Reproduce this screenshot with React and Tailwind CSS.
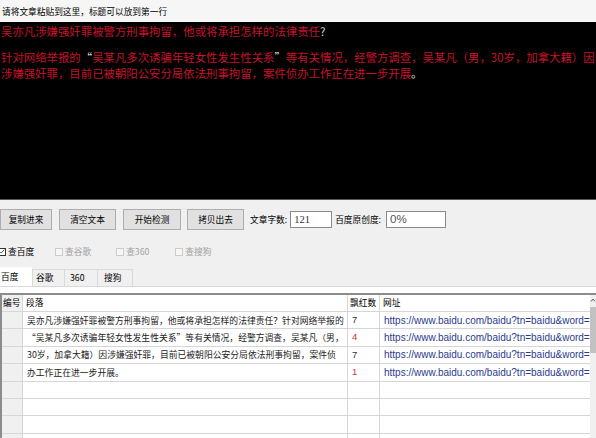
import React from 'react';

const ROWS = [
    { text: '吴亦凡涉嫌强奸罪被警方刑事拘留，他或将承担怎样的法律责任？针对网络举报的', count: '7', color: 'text-[#333333]', tail: '%' },
    { text: '“吴某凡多次诱骗年轻女性发生性关系”等有关情况，经警方调查，吴某凡（男，', count: '4', color: 'text-[#d03030]', tail: '%' },
    { text: '30岁，加拿大籍）因涉嫌强奸罪，目前已被朝阳公安分局依法刑事拘留，案件侦', count: '7', color: 'text-[#333333]', tail: '3' },
    { text: '办工作正在进一步开展。', count: '1', color: 'text-[#c83050]', tail: '%' },
    null, null, null, null,
];

function Button({ children, className = '' }) {
    return (
        <div className={`h-[21px] flex items-center justify-center bg-[#e1e1e1] border border-[#adadad] text-[8.7px] text-black ${className}`}>
            {children}
        </div>
    );
}

function Check({ label, checked, disabled, className = '' }) {
    return (
        <div className={`flex items-center gap-[2px] ${className}`}>
            <div className={`w-[8px] h-[8px] border flex items-center justify-center ${disabled ? 'border-[#cccccc] bg-[#f6f6f6]' : 'border-[#333333] bg-white'}`}>
                {checked && (
                    <svg viewBox="0 0 8 8" className="w-[7px] h-[7px]">
                        <path d="M1 4 L3 6 L7 1.5" fill="none" stroke="#222" strokeWidth="1" />
                    </svg>
                )}
            </div>
            <span className={`text-[8.7px] ${disabled ? 'text-[#a0a0a0]' : 'text-black'}`}>{label}</span>
        </div>
    );
}

export default function App() {
    return (
        <div className="w-[596px] h-[438px] overflow-hidden bg-[#f0f0f0] flex flex-col" style={{ fontFamily: '"Noto Sans CJK SC", "Liberation Sans", sans-serif' }}>
            <div className="h-[22px] shrink-0 bg-[#f6f6f6] px-[2px] pt-[6px] text-[8.7px] leading-[11px] text-black">
                请将文章粘贴到这里，标题可以放到第一行
            </div>
            <div className="h-[178px] shrink-0 bg-black text-[#c8122a] text-[11.4px] leading-[16px] pl-[1px] pt-[1px] border-b border-[#555555]">
                <div>吴亦凡涉嫌强奸罪被警方刑事拘留，他或将承担怎样的法律责任<span className="text-[#dddddd]">?</span></div>
                <div className="h-[10px]" />
                <div>针对网络举报的<span className="text-[#dddddd]">“</span>吴某凡多次诱骗年轻女性发生性关系<span className="text-[#dddddd]">”</span>等有关情况，经警方调查，吴某凡（男，30岁，加拿大籍）因</div>
                <div>涉嫌强奸罪，目前已被朝阳公安分局依法刑事拘留，案件侦办工作正在进一步开展<span className="text-[#dddddd]">。</span></div>
            </div>

            <div className="flex items-center mt-[9px] h-[21px] shrink-0">
                <Button className="w-[52px]">复制进来</Button>
                <Button className="w-[57px] ml-[7px]">清空文本</Button>
                <Button className="w-[58px] ml-[7px]">开始检测</Button>
                <Button className="w-[57px] ml-[6px]">拷贝出去</Button>
                <span className="ml-[6px] text-[8.7px] text-black">文章字数:</span>
                <div className="ml-[3px] w-[42px] h-[17px] bg-white border border-[#8a8a8a] flex items-center pl-[3px] text-[10.5px] text-[#333333]" style={{ fontFamily: '"Liberation Serif", serif' }}>121</div>
                <span className="ml-[3px] text-[8.7px] text-black">百度原创度:</span>
                <div className="ml-[5px] w-[60px] h-[17px] bg-white border border-[#8a8a8a] flex items-center pl-[3px] text-[11.5px] text-[#555555]" style={{ fontFamily: '"Liberation Sans", sans-serif' }}>0%</div>
            </div>

            <div className="flex items-center h-[14px] mt-[15px] shrink-0">
                <Check label="查百度" checked className="-ml-[2px]" />
                <Check label="查谷歌" disabled className="ml-[21px]" />
                <Check label="查360" disabled className="ml-[25px]" />
                <Check label="查搜狗" disabled className="ml-[26px]" />
            </div>

            <div className="flex items-end h-[20px] mt-[8px] shrink-0 border-b border-[#d9d9d9]">
                <div className="w-[32px] h-[19px] bg-white flex items-center pl-[1px] text-[8.7px] text-black">百度</div>
                <div className="w-[33px] h-[17px] bg-[#f0f0f0] border border-b-0 border-[#d9d9d9] flex items-center pl-[3px] text-[8.7px] text-black">谷歌</div>
                <div className="w-[33px] h-[17px] bg-[#f0f0f0] border border-b-0 border-l-0 border-[#d9d9d9] flex items-center pl-[5px] text-[8.7px] text-black">360</div>
                <div className="w-[35px] h-[17px] bg-[#f0f0f0] border border-b-0 border-l-0 border-[#d9d9d9] flex items-center pl-[6px] text-[8.7px] text-black">搜狗</div>
            </div>

            <div className="flex-1 min-h-0 bg-white pt-[6px]">
                <div className="h-full border-t-2 border-l-2 border-[#8c8c8c] flex">
                    <div className="flex-1 min-w-0 flex flex-col overflow-hidden">
                        <div className="flex h-[17px] shrink-0 bg-white border-b border-[#d6d6d6] text-[8.7px] text-black">
                            <div className="w-[21px] bg-[#f0f0f0] border-r border-[#d6d6d6] flex items-center pl-[1px]">编号</div>
                            <div className="w-[325px] border-r border-[#d6d6d6] flex items-center pl-[3px]">段落</div>
                            <div className="w-[32px] border-r border-[#d6d6d6] flex items-center pl-[2px]">飘红数</div>
                            <div className="flex-1 flex items-center pl-[3px]">网址</div>
                        </div>
                        {ROWS.map((row, i) => (
                            <div key={i} className="flex h-[17.4px] border-b border-[#d6d6d6] shrink-0">
                                <div className="w-[21px] shrink-0 bg-[#f0f0f0] border-r border-[#d6d6d6]" />
                                <div className="w-[325px] shrink-0 border-r border-[#d6d6d6] flex items-center pl-[4px] text-[8.8px] text-[#222222] whitespace-nowrap overflow-hidden">
                                    {row ? row.text : ''}
                                </div>
                                <div className={`w-[32px] shrink-0 border-r border-[#d6d6d6] flex items-center pl-[4px] text-[9.5px] ${row ? row.color : ''}`} style={{ fontFamily: '"Liberation Sans", sans-serif' }}>
                                    {row ? row.count : ''}
                                </div>
                                <div className="flex-1 min-w-0 flex items-center pl-[4px] text-[10px] text-[#2b3a8f] whitespace-nowrap overflow-hidden" style={{ fontFamily: '"Liberation Sans", sans-serif' }}>
                                    {row ? `https://www.baidu.com/baidu?tn=baidu&word=${row.tail}` : ''}
                                </div>
                            </div>
                        ))}
                    </div>
                    <div className="w-[6px] shrink-0 bg-[#f0f0f0] flex flex-col items-center">
                        <svg viewBox="0 0 6 6" className="w-[6px] h-[6px] mt-[2px]">
                            <path d="M1 4.5 L3 2 L5 4.5" fill="none" stroke="#606060" strokeWidth="1" />
                        </svg>
                        <div className="w-[6px] h-[46px] bg-[#c2c2c2] mt-[4px]" />
                    </div>
                </div>
            </div>
        </div>
    );
}
